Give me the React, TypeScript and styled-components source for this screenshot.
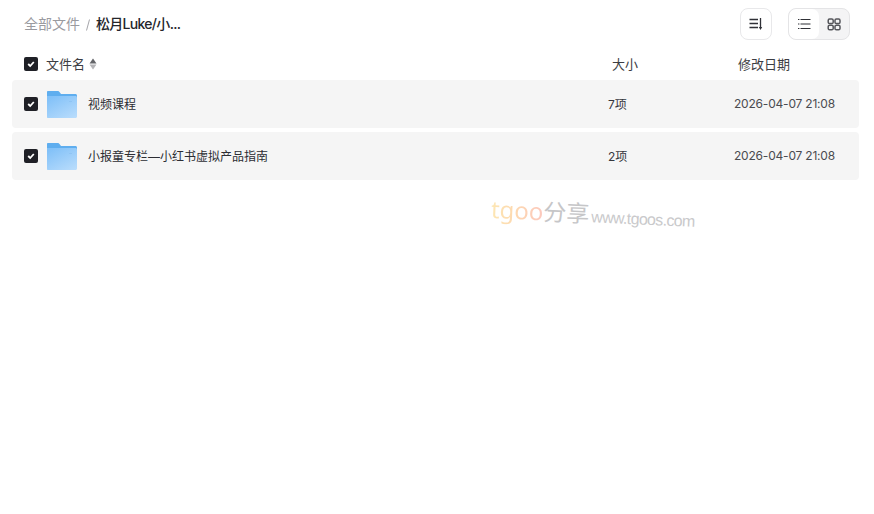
import React from 'react'
import styled, { createGlobalStyle } from 'styled-components'

const font = `Inter, "Noto Sans CJK SC", sans-serif`

const GlobalStyle = createGlobalStyle`
  html, body {
    margin: 0;
    padding: 0;
    background: #fff;
    font-family: ${font};
  }
`

const Page = styled.div`
  position: relative;
  width: 874px;
  height: 514px;
  overflow: hidden;
  box-sizing: border-box;
  padding: 8px 15px 0 12px;
`

const Toolbar = styled.div`
  display: flex;
  align-items: center;
  justify-content: space-between;
  height: 32px;
  padding: 0 9px 0 12px;
`

const Crumbs = styled.div`
  display: flex;
  align-items: center;
  font-size: 14px;
  padding-bottom: 2px;
`

const CrumbRoot = styled.span`
  color: #9a9a9f;
`

const CrumbSep = styled.svg`
  margin: 3px 3px 0 3px;
`

const CrumbCurrent = styled.span`
  color: #25262b;
  font-weight: 500;
  letter-spacing: -0.7px;
`

const ToolGroup = styled.div`
  display: flex;
  gap: 16px;
`

const SortButton = styled.div`
  width: 32px;
  height: 32px;
  box-sizing: border-box;
  border: 1px solid #e8e8ea;
  border-radius: 8px;
  display: flex;
  align-items: center;
  justify-content: center;
`

const ViewSwitch = styled.div`
  display: flex;
  width: 62px;
  height: 32px;
  box-sizing: border-box;
  border: 1px solid #e4e4e6;
  border-radius: 8px;
  background: #f4f4f5;
  overflow: hidden;
`

const ViewOption = styled.div<{ $active?: boolean }>`
  flex: 1;
  display: flex;
  align-items: center;
  justify-content: center;
  background: ${(p) => (p.$active ? '#fff' : 'transparent')};
  border-radius: ${(p) => (p.$active ? '7px' : '0')};
`

const HeaderRow = styled.div`
  display: grid;
  grid-template-columns: 600px 126px 1fr;
  align-items: center;
  height: 40px;
  box-sizing: border-box;
  padding-top: 8px;
  font-size: 13px;
  color: #3c3d43;
`

const HeaderName = styled.div`
  display: flex;
  align-items: center;
  padding-left: 12px;
`

const HeaderLabel = styled.span`
  margin-left: 8px;
  padding-bottom: 2px;
`

const HeaderCell = styled.span`
  padding-bottom: 2px;
`

const SortCaret = styled.svg`
  margin-left: 4px;
`

const Rows = styled.div`
  display: flex;
  flex-direction: column;
  gap: 4px;
`

const Row = styled.div`
  display: grid;
  grid-template-columns: 596px 126px 1fr;
  align-items: center;
  height: 48px;
  background: #f5f5f5;
  border-radius: 4px;
  font-size: 12px;
  color: #36373d;
`

const NameCell = styled.div`
  display: flex;
  align-items: center;
  padding-left: 12px;
`

const FolderWrap = styled.div`
  margin-left: 9px;
  width: 30px;
  height: 27px;
  display: flex;
`

const RowName = styled.span`
  margin-left: 11px;
  padding-bottom: 2px;
  color: #2c2d33;
`

const SizeCell = styled.span`
  padding-bottom: 2px;
`

const DateCell = styled.span`
  padding-bottom: 2px;
  letter-spacing: -0.2px;
  color: #4a4b50;
`

const Check = styled.span`
  width: 14px;
  height: 14px;
  flex: none;
  border-radius: 2px;
  background: #1f2026;
  display: flex;
  align-items: center;
  justify-content: center;
`

const Watermark = styled.div`
  position: absolute;
  left: 491px;
  top: 194px;
  display: flex;
  align-items: baseline;
  transform: rotate(2.5deg);
  transform-origin: left center;
  white-space: nowrap;
`

const WatermarkBrand = styled.span`
  font-family: "Noto Sans", sans-serif;
  font-size: 24px;
  line-height: 30px;
  background: linear-gradient(90deg, #fde7b4 0%, #fdd9b0 45%, #fcc8bd 100%);
  -webkit-background-clip: text;
  background-clip: text;
  color: transparent;
`

const WatermarkCn = styled.span`
  font-size: 23px;
  line-height: 30px;
  color: #c6c6c8;
`

const WatermarkUrl = styled.span`
  font-family: "Liberation Sans", sans-serif;
  font-size: 16px;
  margin-left: 2px;
  letter-spacing: -0.65px;
  color: #c9c9cb;
`

const CheckBox = () => (
  <Check>
    <svg width="10" height="10" viewBox="0 0 10 10">
      <path d="M2.2 5 4.2 7 7.8 3" fill="none" stroke="#fff" strokeWidth="1.8" />
    </svg>
  </Check>
)

const Folder = ({ id }: { id: string }) => (
  <svg width="30" height="27" viewBox="0 0 30 27">
    <defs>
      <linearGradient id={id} x1="0.2" y1="0" x2="0.9" y2="1">
        <stop offset="0" stopColor="#82c1f8" />
        <stop offset="1" stopColor="#b8dcfc" />
      </linearGradient>
    </defs>
    <path d="M1 0h9.5c1 0 1.6.4 2.2 1.2L14 3h14.5c.8 0 1.5.7 1.5 1.5V8H0V1c0-.6.4-1 1-1z" fill="#5faeef" />
    <path d="M0 5h28.5c.8 0 1.5.7 1.5 1.5V25.5c0 .8-.7 1.5-1.5 1.5H1c-.6 0-1-.4-1-1z" fill={`url(#${id})`} />
    <rect x="22" y="10" width="3" height="1" fill="#8fc4f4" />
  </svg>
)

const rows = [
  { name: '视频课程', size: '7项', date: '2026-04-07 21:08' },
  { name: '小报童专栏—小红书虚拟产品指南', size: '2项', date: '2026-04-07 21:08' },
]

export default function App() {
  return (
    <Page>
      <GlobalStyle />
      <Toolbar>
        <Crumbs>
          <CrumbRoot>全部文件</CrumbRoot>
          <CrumbSep width="10" height="14" viewBox="0 0 10 14">
            <path d="M6.5 1.5 3.5 12.5" stroke="#a5a5aa" strokeWidth="1" fill="none" />
          </CrumbSep>
          <CrumbCurrent>松月Luke/小...</CrumbCurrent>
        </Crumbs>
        <ToolGroup>
          <SortButton>
            <svg width="16" height="16" viewBox="0 0 16 16">
              <path d="M1.5 3.5h8.5M1.5 7.5h8.5M1.5 11.5h8.5" stroke="#2f3036" strokeWidth="1.3" fill="none" />
              <path d="M12.5 2v10" stroke="#2f3036" strokeWidth="1.3" fill="none" />
              <path d="M10.8 11h3.4L12.5 14z" fill="#2f3036" />
            </svg>
          </SortButton>
          <ViewSwitch>
            <ViewOption $active>
              <svg width="14" height="14" viewBox="0 0 14 14">
                <path d="M3.5 2.5h10M3.5 7h10M3.5 11.5h10" stroke="#2f3036" strokeWidth="1.2" fill="none" />
                <path d="M1 2.5h1.4M1 7h1.4M1 11.5h1.4" stroke="#2f3036" strokeWidth="1.2" fill="none" />
              </svg>
            </ViewOption>
            <ViewOption>
              <svg width="15" height="15" viewBox="0 0 15 15">
                <g fill="none" stroke="#55565b" strokeWidth="1.5">
                  <rect x="1.2" y="2" width="5" height="4.6" rx="1.4" />
                  <rect x="8" y="2" width="5" height="4.6" rx="1.4" />
                  <rect x="1.2" y="8.2" width="5" height="4.6" rx="1.4" />
                  <rect x="8" y="8.2" width="5" height="4.6" rx="1.4" />
                </g>
              </svg>
            </ViewOption>
          </ViewSwitch>
        </ToolGroup>
      </Toolbar>
      <HeaderRow>
        <HeaderName>
          <CheckBox />
          <HeaderLabel>文件名</HeaderLabel>
          <SortCaret width="8" height="12" viewBox="0 0 8 12">
            <path d="M4 .5 7.5 5.4H.5z" fill="#636468" />
            <path d="M4 11.5 7.5 6.6H.5z" fill="#b4b4b7" />
          </SortCaret>
        </HeaderName>
        <HeaderCell>大小</HeaderCell>
        <HeaderCell>修改日期</HeaderCell>
      </HeaderRow>
      <Rows>
        {rows.map((r, i) => (
          <Row key={r.name}>
            <NameCell>
              <CheckBox />
              <FolderWrap>
                <Folder id={`folder-${i}`} />
              </FolderWrap>
              <RowName>{r.name}</RowName>
            </NameCell>
            <SizeCell>{r.size}</SizeCell>
            <DateCell>{r.date}</DateCell>
          </Row>
        ))}
      </Rows>
      <Watermark>
        <WatermarkBrand>tgoo</WatermarkBrand>
        <WatermarkCn>分享</WatermarkCn>
        <WatermarkUrl>www.tgoos.com</WatermarkUrl>
      </Watermark>
    </Page>
  )
}
